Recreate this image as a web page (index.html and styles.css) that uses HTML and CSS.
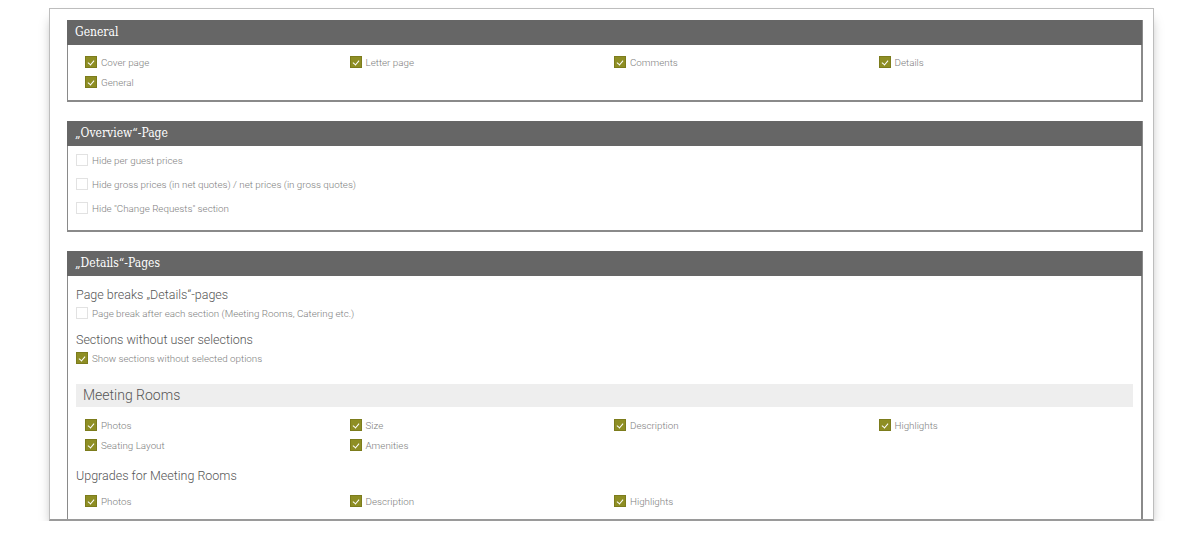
FILE: index.html
```html
<!DOCTYPE html>
<html lang="en">

<head>
    <meta charset="UTF-8">
    <meta name="viewport" content="width=device-width, initial-scale=1.0">
    <title>PDF settings</title>
    <link rel="stylesheet" href="styles.css">
</head>

<body>
    <div class="sheet">
        <section class="panel">
            <h2 class="panel-title">General</h2>
            <div class="panel-body panel-body-general">
                <div class="options-grid">
                    <label class="option"><span class="cb checked"></span>Cover page</label>
                    <label class="option"><span class="cb checked"></span>Letter page</label>
                    <label class="option"><span class="cb checked"></span>Comments</label>
                    <label class="option"><span class="cb checked"></span>Details</label>
                    <label class="option"><span class="cb checked"></span>General</label>
                </div>
            </div>
        </section>

        <section class="panel">
            <h2 class="panel-title">„Overview“-Page</h2>
            <div class="panel-body panel-body-overview">
                <label class="option option-tall"><span class="cb"></span>Hide per guest prices</label>
                <label class="option option-tall"><span class="cb"></span>Hide gross prices (in net quotes) / net prices (in gross quotes)</label>
                <label class="option option-tall"><span class="cb"></span>Hide "Change Requests" section</label>
            </div>
        </section>

        <section class="panel panel-last">
            <h2 class="panel-title">„Details“-Pages</h2>
            <div class="panel-body panel-body-details">
                <h3 class="sub-title first">Page breaks „Details“-pages</h3>
                <label class="option"><span class="cb"></span>Page break after each section (Meeting Rooms, Catering etc.)</label>

                <h3 class="sub-title">Sections without user selections</h3>
                <label class="option"><span class="cb checked"></span>Show sections without selected options</label>

                <div class="group-bar">Meeting Rooms</div>
                <div class="options-grid">
                    <label class="option"><span class="cb checked"></span>Photos</label>
                    <label class="option"><span class="cb checked"></span>Size</label>
                    <label class="option"><span class="cb checked"></span>Description</label>
                    <label class="option"><span class="cb checked"></span>Highlights</label>
                    <label class="option"><span class="cb checked"></span>Seating Layout</label>
                    <label class="option"><span class="cb checked"></span>Amenities</label>
                </div>

                <h3 class="sub-title upgrades">Upgrades for Meeting Rooms</h3>
                <div class="options-grid">
                    <label class="option"><span class="cb checked"></span>Photos</label>
                    <label class="option"><span class="cb checked"></span>Description</label>
                    <label class="option"><span class="cb checked"></span>Highlights</label>
                </div>
            </div>
        </section>
    </div>
</body>
</html>
```

FILE: styles.css
```css
* {
    margin: 0;
    padding: 0;
    box-sizing: border-box;
}

body {
    background: #fff;
    font-family: Roboto, "Liberation Sans", sans-serif;
    font-weight: 300;
    color: #888;
}

.sheet {
    width: 1105px;
    height: 513px;
    margin: 8px 0 0 49px;
    padding: 11px 10px 0 17px;
    border: 1px solid #bdbdbd;
    border-bottom: 2px solid #9a9a9a;
    overflow: hidden;
    box-shadow: 0 8px 12px -4px rgba(0, 0, 0, 0.4);
}

.panel {
    border: 1px solid #8a8a8a;
    border-width: 1px 2px 2px 1px;
    margin-bottom: 19px;
}

.panel-last {
    margin-bottom: 0;
    border-bottom: 0;
    height: 400px;
}

.panel-title {
    height: 25px;
    background: #666;
    color: #fff;
    font-family: "DejaVu Serif Condensed", "Liberation Serif", serif;
    font-weight: normal;
    font-size: 12px;
    line-height: 25px;
    padding-left: 8px;
    margin: -1px -1px 0 -1px;
}

.panel-body {
    padding: 0 8px;
}

.panel-body-general {
    padding-top: 7px;
    padding-bottom: 8px;
}

.panel-body-overview {
    padding-top: 2px;
    padding-bottom: 10px;
}

.panel-body-details {
    padding-top: 10px;
}

.options-grid {
    display: grid;
    grid-template-columns: repeat(4, 264.5px);
    padding-left: 9px;
}

.option {
    display: flex;
    align-items: center;
    height: 20px;
    font-size: 9.8px;
    color: #7e7e7e;
}

.option-tall {
    height: 24px;
}

.cb {
    width: 12px;
    height: 12px;
    margin-right: 4px;
    border: 1px solid #e2e2e2;
    background: #fff;
    flex: none;
}

.cb.checked {
    position: relative;
    background: #8e8e24;
    border-color: #7c7c1c;
}

.cb.checked::after {
    content: "";
    position: absolute;
    left: 3px;
    top: 2px;
    width: 3px;
    height: 5px;
    border: solid #fff;
    border-width: 0 1.5px 1.5px 0;
    transform: rotate(40deg);
}

.sub-title {
    font-weight: 300;
    font-size: 12.5px;
    line-height: 17px;
    color: #555;
    margin-top: 8px;
}

.sub-title.first {
    margin-top: 0;
}

.group-bar {
    height: 23px;
    background: #eee;
    margin-top: 16px;
    margin-bottom: 8px;
    padding-left: 7px;
    font-size: 14px;
    line-height: 23px;
    color: #555;
}

.sub-title.upgrades {
    margin-top: 12px;
    margin-bottom: 7px;
}
```
